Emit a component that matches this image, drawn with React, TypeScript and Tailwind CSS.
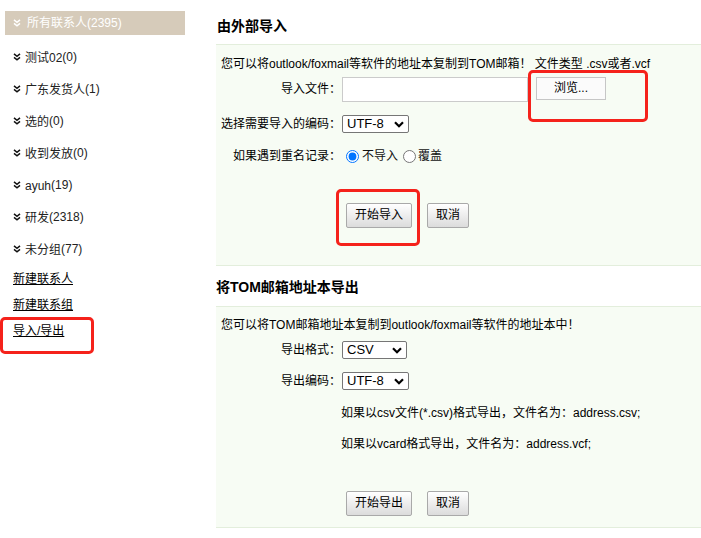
import React from "react";

const DblChevron = ({ className = "" }: { className?: string }) => (
  <svg width="8" height="8" viewBox="0 0 8 8" className={className} fill="none" stroke="currentColor" strokeWidth="1.5">
    <polyline points="1,0.8 4,3.3 7,0.8" />
    <polyline points="1,4.3 4,6.8 7,4.3" />
  </svg>
);

const Chevron = () => (
  <svg width="10" height="7" viewBox="0 0 10 7" fill="none" stroke="#000" strokeWidth="2.2">
    <polyline points="1,1.2 5,5.2 9,1.2" />
  </svg>
);

const FakeSelect = ({ value, w }: { value: string; w: string }) => (
  <div className={`${w} h-[18px] border border-[#767676] rounded-[2px] bg-white flex items-center justify-between pl-[4px] pr-[4px] text-[13px] leading-[16px] text-black`}>
    <span>{value}</span>
    <Chevron />
  </div>
);

const Btn = ({ children, className = "" }: { children: React.ReactNode; className?: string }) => (
  <button className={`h-[25px] px-[8px] text-[12px] leading-[23px] text-black border border-[#a9a9a9] rounded-[2px] bg-linear-to-b from-white to-[#dcdcdc] ${className}`}>
    {children}
  </button>
);

const groups = [
  ["测试02", "(0)"],
  ["广东发货人", "(1)"],
  ["选的", "(0)"],
  ["收到发放", "(0)"],
  ["ayuh", "(19)"],
  ["研发", "(2318)"],
  ["未分组", "(77)"],
];

export default function App() {
  return (
    <div className="relative w-full h-[538px] bg-white text-[#222] text-[12px] font-['Liberation_Sans','Noto_Sans_CJK_SC',sans-serif] flex overflow-hidden">
      {/* Sidebar */}
      <div className="w-[216px] shrink-0 pt-[11px]">
        <div className="ml-[5px] w-[180px] h-[24px] bg-[#d6cbba] flex items-center pl-[8px] text-white">
          <DblChevron />
          <span className="ml-[6px]">所有联系人(2395)</span>
        </div>
        <ul className="mt-[6px]">
          {groups.map(([n, c]) => (
            <li key={n} className="h-[32px] flex items-center pl-[13px]">
              <DblChevron className="text-[#111]" />
              <span className="ml-[4px]">
                {n}
                <span className="align-[1px]">{c}</span>
              </span>
            </li>
          ))}
        </ul>
        <div className="mt-[1px]">
          {["新建联系人", "新建联系组", "导入/导出"].map((t) => (
            <div key={t} className="h-[26px] flex items-center pl-[13px]">
              <a className="underline text-black cursor-pointer">{t}</a>
            </div>
          ))}
        </div>
      </div>

      {/* Main */}
      <div className="flex-1 min-w-0 text-black">
        <div className="h-[45px] pl-[1px] pt-[16px] font-bold text-[14px] leading-[20px] border-b border-[#e3eedc]">由外部导入</div>
        <div className="bg-[#f7fcf4] border-b border-[#e3eedc] pt-[9px] pb-[37px] pl-[5px]">
          <div className="leading-[20px]">您可以将outlook/foxmail等软件的地址本复制到TOM邮箱！ 文件类型 .csv或者.vcf</div>
          <div className="mt-[3px] flex items-start">
            <div className="w-[120px] text-right leading-[25px]">导入文件：</div>
            <div className="ml-[1px] w-[186px] h-[25px] border border-[#cbcbcb] bg-white" />
            <button className="ml-[8px] w-[70px] h-[23px] border border-[#c6c6c6] bg-[#fbfbfb] text-[12px] leading-[21px] text-black">浏览...</button>
          </div>
          <div className="mt-[13px] flex items-center h-[18px]">
            <div className="w-[120px] text-right">选择需要导入的编码：</div>
            <div className="ml-[1px]">
              <FakeSelect value="UTF-8" w="w-[67px]" />
            </div>
          </div>
          <div className="mt-[13px] flex items-center h-[20px]">
            <div className="w-[120px] text-right">如果遇到重名记录：</div>
            <label className="ml-[5px] flex items-center">
              <input type="radio" name="dup" defaultChecked className="w-[13px] h-[13px] m-0" />
              <span className="ml-[3px] text-[#111]">不导入</span>
            </label>
            <label className="ml-[5px] flex items-center">
              <input type="radio" name="dup" className="w-[13px] h-[13px] m-0" />
              <span className="ml-[2px] text-[#111]">覆盖</span>
            </label>
          </div>
          <div className="mt-[37px] flex pl-[125px]">
            <Btn>开始导入</Btn>
            <Btn className="ml-[15px]">取消</Btn>
          </div>
        </div>

        <div className="h-[41px] pt-[11px] font-bold text-[14px] leading-[20px] border-b border-[#e3eedc]">将TOM邮箱地址本导出</div>
        <div className="bg-[#f7fcf4] border-b border-[#e3eedc] pt-[8px] pb-[11px] pl-[5px]">
          <div className="leading-[20px]">您可以将TOM邮箱地址本复制到outlook/foxmail等软件的地址本中！</div>
          <div className="mt-[6px] flex items-center h-[18px]">
            <div className="w-[120px] text-right">导出格式：</div>
            <div className="ml-[1px]">
              <FakeSelect value="CSV" w="w-[65px]" />
            </div>
          </div>
          <div className="mt-[13px] flex items-center h-[18px]">
            <div className="w-[120px] text-right">导出编码：</div>
            <div className="ml-[1px]">
              <FakeSelect value="UTF-8" w="w-[67px]" />
            </div>
          </div>
          <div className="mt-[13px] pl-[120px] leading-[20px]">如果以csv文件(*.csv)格式导出，文件名为：address.csv;</div>
          <div className="mt-[11px] pl-[120px] leading-[20px]">如果以vcard格式导出，文件名为：address.vcf;</div>
          <div className="mt-[37px] flex pl-[125px]">
            <Btn>开始导出</Btn>
            <Btn className="ml-[15px]">取消</Btn>
          </div>
        </div>
      </div>

      {/* Red annotation boxes */}
      <div className="absolute left-[528px] top-[70px] w-[120px] h-[52px] border-[3px] border-[#f5221b] rounded-[5px] pointer-events-none" />
      <div className="absolute left-[336px] top-[189px] w-[84px] h-[57px] border-[3px] border-[#f5221b] rounded-[5px] pointer-events-none" />
      <div className="absolute left-0 top-[317px] w-[94px] h-[37px] border-[3px] border-[#f5221b] rounded-[5px] pointer-events-none" />
    </div>
  );
}
